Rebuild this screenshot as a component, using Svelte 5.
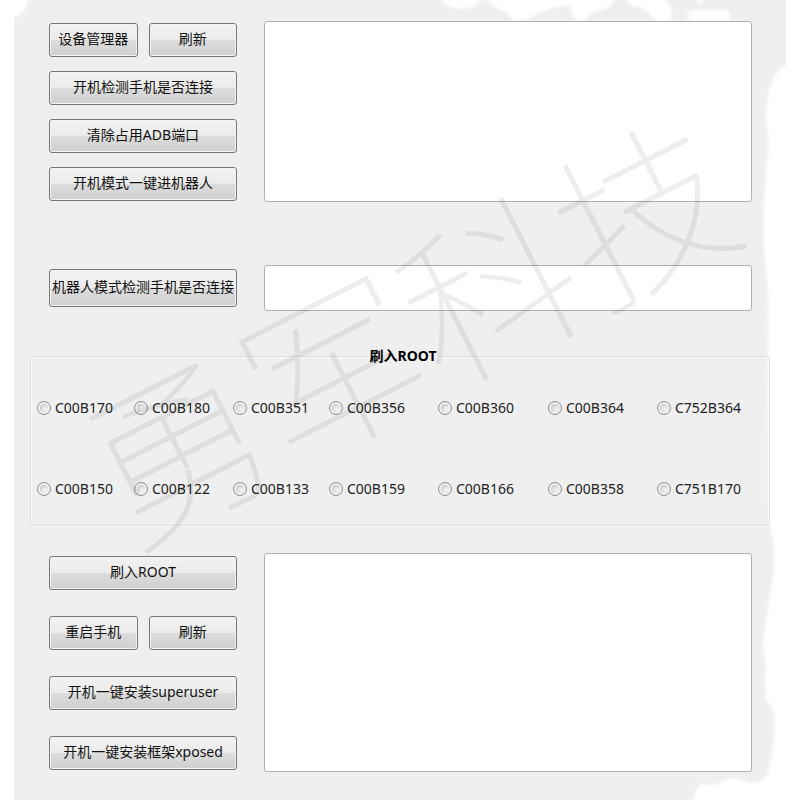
<script>
  let deviceLog = $state('');
  let robotStatus = $state('');
  let flashLog = $state('');
  let selected = $state('');

  const builds = [
    'C00B170', 'C00B180', 'C00B351', 'C00B356', 'C00B360', 'C00B364', 'C752B364',
    'C00B150', 'C00B122', 'C00B133', 'C00B159', 'C00B166', 'C00B358', 'C751B170'
  ];
</script>

<main class="window">
  <svg class="overlay" viewBox="0 0 800 800" aria-hidden="true">
    <defs>
      <filter id="soft" x="-10%" y="-10%" width="120%" height="120%">
        <feGaussianBlur stdDeviation="1.6" />
      </filter>
    </defs>
    <g fill="#fff" filter="url(#soft)">
      <path d="M10 -6H29Q28 6 22 13Q17 18 10 18Z" />
      <path d="M440 -6H482Q482 8 462 9Q441 8 440 -6Z" />
      <path d="M485 -6H616Q613 9 599 10Q590 12 585 20H577Q571 16 571 6Q560 4 548 10Q535 14 526 20H513Q507 11 498 8Q487 5 485 -6Z" />
      <path d="M624 -6H660Q671 4 672 14Q671 24 660 23Q653 20 647 10Q638 6 630 6Z" />
      <rect x="687" y="10" width="43" height="12" rx="6" />
      <circle cx="700" cy="0" r="3" />
      <path d="M810 64H788Q776 69 771 84Q765 103 766 121Q770 145 766 170Q763 210 764 250Q770 300 768 350L769 510Q769 530 773 540Q776 565 770 595Q765 620 763 645L766 666Q764 684 766 700Q775 710 775 725Q773 755 767 775Q761 784 751 783Q735 776 725 780Q713 788 702 783Q692 790 692 810H810Z" />
    </g>
  </svg>

  <section class="block">
    <div class="actions">
      <div class="pair">
        <button type="button">设备管理器</button>
        <button type="button">刷新</button>
      </div>
      <button type="button">开机检测手机是否连接</button>
      <button type="button">清除占用ADB端口</button>
      <button type="button">开机模式一键进机器人</button>
    </div>
    <textarea class="log-top" aria-label="设备管理器" bind:value={deviceLog}></textarea>
  </section>

  <section class="block robot">
    <button type="button" class="tall">机器人模式检测手机是否连接</button>
    <input type="text" aria-label="机器人模式检测手机是否连接" bind:value={robotStatus} />
  </section>

  <fieldset>
    <legend>刷入ROOT</legend>
    <div class="builds">
      {#each builds as build}
        <label>
          <input type="radio" name="build" value={build} bind:group={selected} />
          {build}
        </label>
      {/each}
    </div>
  </fieldset>

  <section class="block flash">
    <div class="actions wide-gap">
      <button type="button">刷入ROOT</button>
      <div class="pair">
        <button type="button">重启手机</button>
        <button type="button">刷新</button>
      </div>
      <button type="button">开机一键安装superuser</button>
      <button type="button">开机一键安装框架xposed</button>
    </div>
    <textarea class="log-bottom" aria-label="刷入ROOT" bind:value={flashLog}></textarea>
  </section>

  <svg class="overlay watermark" viewBox="0 0 800 800" aria-hidden="true">
    <text x="132" y="548" transform="rotate(-27 132 548)">勇军科技</text>
  </svg>
</main>

<style>
  :global(body) {
    background: #fff;
  }

  .window {
    position: relative;
    overflow: hidden;
    margin: 0 14px;
    padding: 21px 0 28px;
    background: #efefef;
    color: #111;
    font-family: "Noto Sans", "Noto Sans CJK SC", sans-serif;
    font-size: 14px;
    line-height: 20px;
  }

  .overlay {
    position: absolute;
    inset: 0 -14px;
    width: calc(100% + 28px);
    height: 100%;
    pointer-events: none;
  }

  .watermark text {
    font-family: "Noto Sans CJK SC", sans-serif;
    font-size: 174px;
    font-weight: 100;
    fill: rgba(0, 0, 0, 0.07);
  }

  .block {
    position: relative;
    display: grid;
    grid-template-columns: 188px 1fr;
    column-gap: 27px;
    align-items: center;
    padding: 0 34px 0 35px;
  }

  .robot {
    margin-top: 63px;
  }

  .flash {
    margin-top: 28px;
  }

  .actions {
    display: flex;
    flex-direction: column;
    gap: 14px;
  }

  .wide-gap {
    gap: 26px;
  }

  .pair {
    display: grid;
    grid-template-columns: 1fr 1fr;
    gap: 11px;
  }

  button {
    height: 34px;
    padding: 0 0 2px;
    border: 1px solid #777;
    border-radius: 3px;
    background: linear-gradient(#f2f2f2, #ebebeb 50%, #dddddd 50%, #cfcfcf);
    box-shadow: inset 0 0 0 1px #f4f4f4;
    color: #111;
    font: inherit;
    white-space: nowrap;
  }

  button:active {
    background: linear-gradient(#e2e2e2, #cccccc);
  }

  .tall {
    height: 38px;
  }

  textarea,
  input[type='text'] {
    box-sizing: border-box;
    width: 100%;
    margin: 0;
    padding: 6px;
    border: 1px solid #b0b0b0;
    border-radius: 3px;
    background: #fff;
    font: inherit;
    resize: none;
    outline: none;
  }

  .log-top {
    height: 181px;
  }

  .log-bottom {
    height: 219px;
  }

  input[type='text'] {
    height: 46px;
  }

  fieldset {
    position: relative;
    min-width: 0;
    margin: 35px 16px 0;
    padding: 0 0 0 6px;
    border: 1px solid #d6dde4;
    border-radius: 4px;
    box-shadow: inset 0 0 0 1px #fafafa;
  }

  legend {
    margin: 0 auto;
    padding: 0 2px;
    color: #000;
    font-weight: 700;
  }

  .builds {
    display: grid;
    grid-template-columns: 97fr 99fr 96fr 109fr 110fr 109fr 112fr;
    row-gap: 61px;
    padding: 32px 0 25px;
  }

  label {
    display: flex;
    align-items: center;
    gap: 4px;
    color: #222;
  }

  input[type='radio'] {
    appearance: none;
    flex: none;
    box-sizing: border-box;
    width: 14px;
    height: 14px;
    margin: 0;
    border: 1px solid #929292;
    border-radius: 50%;
    background: radial-gradient(circle at 60% 60%, #eeeeee 15%, #cccccc 50%);
    box-shadow: inset 0 0 0 2px #f2f2f2;
  }

  input[type='radio']:checked {
    background: radial-gradient(circle, #3c6f9c 35%, #dddddd 45%);
  }
</style>
